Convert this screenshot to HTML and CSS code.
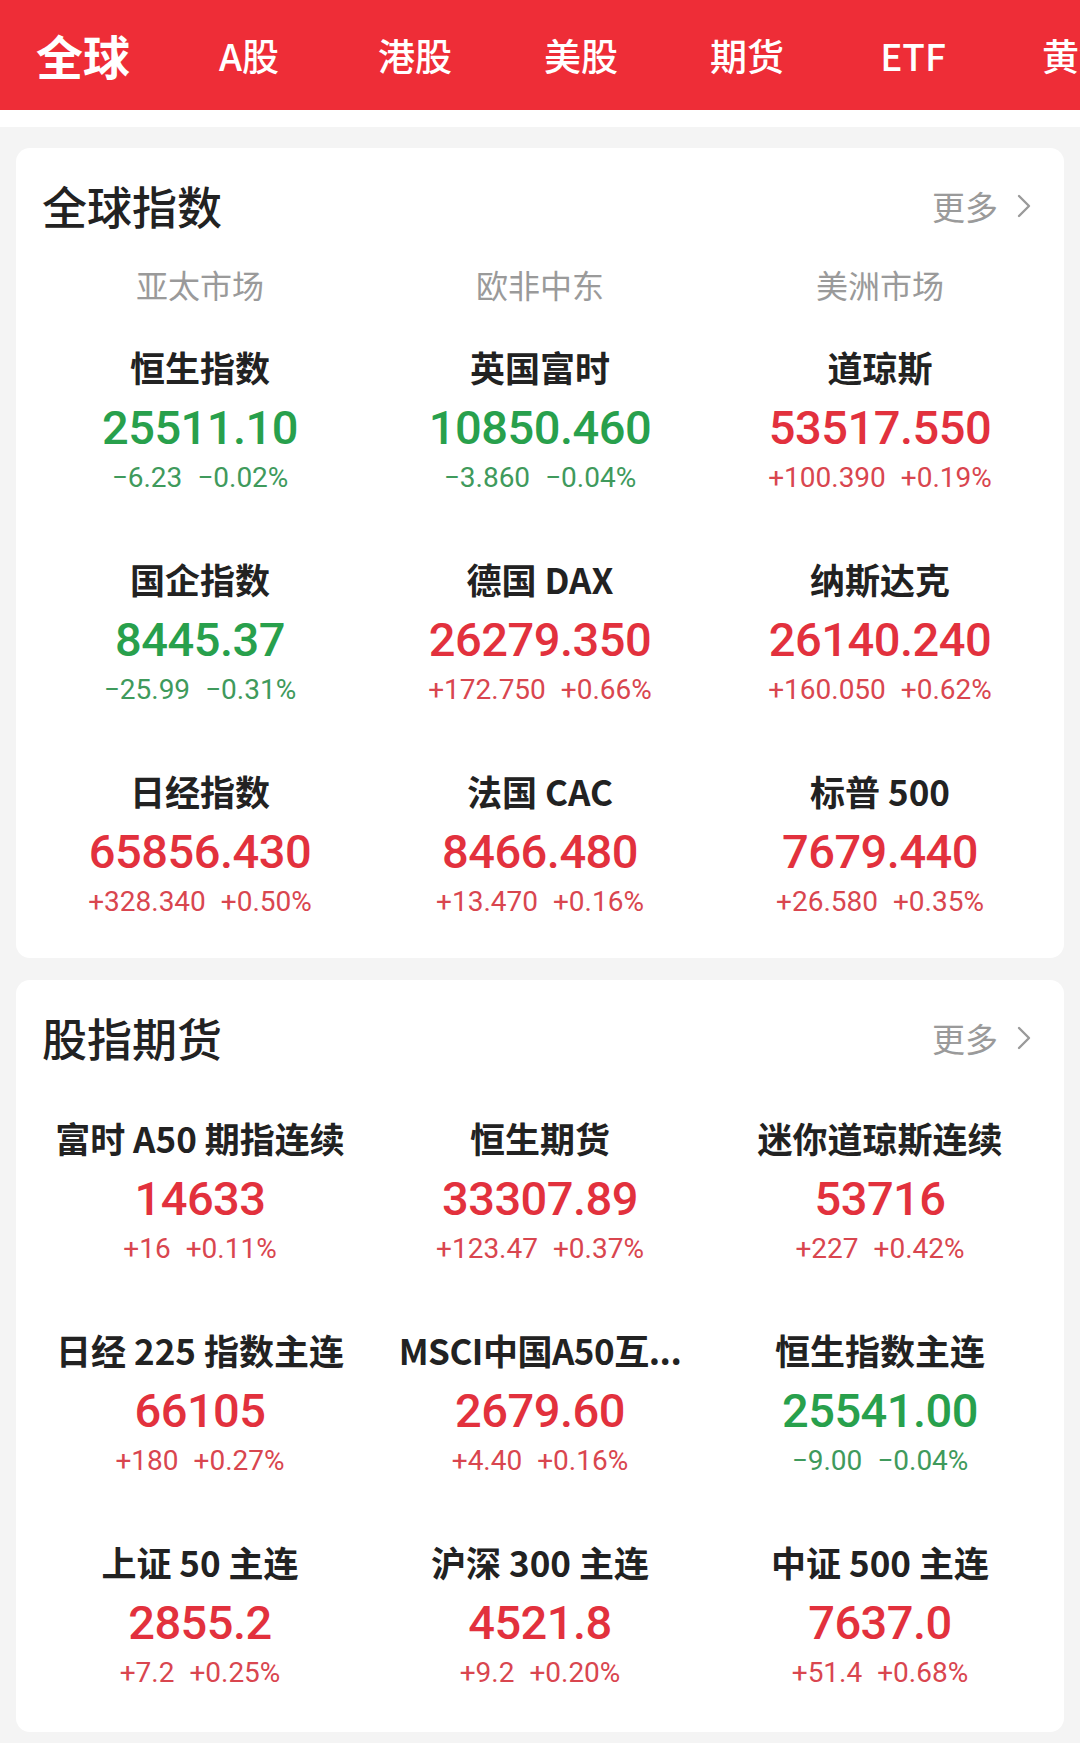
FILE: index.html
```html
<!DOCTYPE html>
<html lang="zh-CN">
<head>
<meta charset="utf-8">
<title>全球</title>
<link rel="stylesheet" href="styles.css">
</head>
<body>
<header class="tabs">
  <div class="tab tab-active">全球</div>
  <div class="tab">A股</div>
  <div class="tab">港股</div>
  <div class="tab">美股</div>
  <div class="tab">期货</div>
  <div class="tab">ETF</div>
  <div class="tab">黄金</div>
</header>
<div class="strip"></div>

<main class="page">
  <section class="card card-index">
    <div class="card-head">
      <h2 class="card-title">全球指数</h2>
      <div class="more">更多<svg class="chev" viewBox="0 0 16 26" width="16" height="26"><polyline points="3,3 13,13 3,23" fill="none" stroke="#9a9a9a" stroke-width="2.4" stroke-linecap="round" stroke-linejoin="round"/></svg></div>
    </div>
    <div class="regions">
      <div class="region">亚太市场</div>
      <div class="region">欧非中东</div>
      <div class="region">美洲市场</div>
    </div>
    <div class="grid">
      <div class="cell down"><div class="name">恒生指数</div><div class="price">25511.10</div><div class="chg"><span>−6.23</span><span>−0.02%</span></div></div>
      <div class="cell down"><div class="name">英国富时</div><div class="price">10850.460</div><div class="chg"><span>−3.860</span><span>−0.04%</span></div></div>
      <div class="cell up"><div class="name">道琼斯</div><div class="price">53517.550</div><div class="chg"><span>+100.390</span><span>+0.19%</span></div></div>

      <div class="cell down"><div class="name">国企指数</div><div class="price">8445.37</div><div class="chg"><span>−25.99</span><span>−0.31%</span></div></div>
      <div class="cell up"><div class="name">德国 DAX</div><div class="price">26279.350</div><div class="chg"><span>+172.750</span><span>+0.66%</span></div></div>
      <div class="cell up"><div class="name">纳斯达克</div><div class="price">26140.240</div><div class="chg"><span>+160.050</span><span>+0.62%</span></div></div>

      <div class="cell up"><div class="name">日经指数</div><div class="price">65856.430</div><div class="chg"><span>+328.340</span><span>+0.50%</span></div></div>
      <div class="cell up"><div class="name">法国 CAC</div><div class="price">8466.480</div><div class="chg"><span>+13.470</span><span>+0.16%</span></div></div>
      <div class="cell up"><div class="name">标普 500</div><div class="price">7679.440</div><div class="chg"><span>+26.580</span><span>+0.35%</span></div></div>
    </div>
  </section>

  <section class="card card-futures">
    <div class="card-head">
      <h2 class="card-title">股指期货</h2>
      <div class="more">更多<svg class="chev" viewBox="0 0 16 26" width="16" height="26"><polyline points="3,3 13,13 3,23" fill="none" stroke="#9a9a9a" stroke-width="2.4" stroke-linecap="round" stroke-linejoin="round"/></svg></div>
    </div>
    <div class="grid">
      <div class="cell up"><div class="name">富时 A50 期指连续</div><div class="price">14633</div><div class="chg"><span>+16</span><span>+0.11%</span></div></div>
      <div class="cell up"><div class="name">恒生期货</div><div class="price">33307.89</div><div class="chg"><span>+123.47</span><span>+0.37%</span></div></div>
      <div class="cell up"><div class="name">迷你道琼斯连续</div><div class="price">53716</div><div class="chg"><span>+227</span><span>+0.42%</span></div></div>

      <div class="cell up"><div class="name">日经 225 指数主连</div><div class="price">66105</div><div class="chg"><span>+180</span><span>+0.27%</span></div></div>
      <div class="cell up"><div class="name name-tight">MSCI中国A50互...</div><div class="price">2679.60</div><div class="chg"><span>+4.40</span><span>+0.16%</span></div></div>
      <div class="cell down"><div class="name">恒生指数主连</div><div class="price">25541.00</div><div class="chg"><span>−9.00</span><span>−0.04%</span></div></div>

      <div class="cell up"><div class="name">上证 50 主连</div><div class="price">2855.2</div><div class="chg"><span>+7.2</span><span>+0.25%</span></div></div>
      <div class="cell up"><div class="name">沪深 300 主连</div><div class="price">4521.8</div><div class="chg"><span>+9.2</span><span>+0.20%</span></div></div>
      <div class="cell up"><div class="name">中证 500 主连</div><div class="price">7637.0</div><div class="chg"><span>+51.4</span><span>+0.68%</span></div></div>
    </div>
  </section>
</main>
</body>
</html>
```

FILE: styles.css
```css
* { box-sizing: border-box; }

html, body {
  margin: 0;
  padding: 0;
}

body {
  width: 1080px;
  min-height: 1743px;
  background: #f4f4f4;
  font-family: "Noto Sans CJK SC", "Noto Sans", sans-serif;
  color: #222;
  overflow: hidden;
}

.tabs {
  height: 110px;
  background: #ee2d37;
  display: flex;
  align-items: center;
  overflow: hidden;
  white-space: nowrap;
}

.tab {
  flex: 0 0 166px;
  text-align: center;
  color: #fff;
  font-size: 37px;
  font-weight: 500;
  line-height: 56px;
}

.tab-active {
  font-size: 47px;
  font-weight: 700;
}

.strip {
  height: 17px;
  background: #fff;
}

.page {
  padding: 21px 16px 0;
  display: flex;
  flex-direction: column;
  gap: 22px;
}

.card {
  background: #fff;
  border-radius: 14px;
}

.card-index { padding-bottom: 18px; }
.card-futures { padding-bottom: 21px; }

.card-head {
  height: 116px;
  padding: 0 32px 0 26px;
  display: flex;
  align-items: center;
  justify-content: space-between;
}

.card-title {
  margin: 0;
  font-size: 45px;
  font-weight: 500;
  line-height: 60px;
  color: #222;
}

.more {
  display: flex;
  align-items: center;
  gap: 18px;
  font-size: 33px;
  line-height: 48px;
  color: #9a9a9a;
}

.chev { display: block; }

.regions {
  display: grid;
  grid-template-columns: repeat(3, 340px);
  padding: 0 14px;
  margin-top: -2px;
  margin-bottom: 19px;
}

.region {
  text-align: center;
  font-size: 32px;
  line-height: 44px;
  color: #9a9a9a;
}

.grid {
  display: grid;
  grid-template-columns: repeat(3, 340px);
  row-gap: 21px;
  padding: 0 14px;
}

.cell {
  padding: 20px 0 21px;
  display: flex;
  flex-direction: column;
  align-items: center;
}

.name {
  font-size: 35px;
  font-weight: 700;
  line-height: 44px;
  color: #222;
  white-space: nowrap;
}

.name-tight {
  letter-spacing: -0.5px;
}

.price {
  margin-top: 11px;
  font-family: Roboto, "Liberation Sans", sans-serif;
  font-size: 47px;
  font-weight: 500;
  letter-spacing: -0.5px;
  line-height: 56px;
}

.chg {
  margin-top: 5px;
  display: flex;
  gap: 15px;
  font-family: Roboto, "Liberation Sans", sans-serif;
  font-size: 28px;
  line-height: 34px;
}

.up .price { color: #e2313d; }
.up .chg { color: #d9464f; }
.down .price { color: #28a04c; }
.down .chg { color: #3f9a5c; }
```
